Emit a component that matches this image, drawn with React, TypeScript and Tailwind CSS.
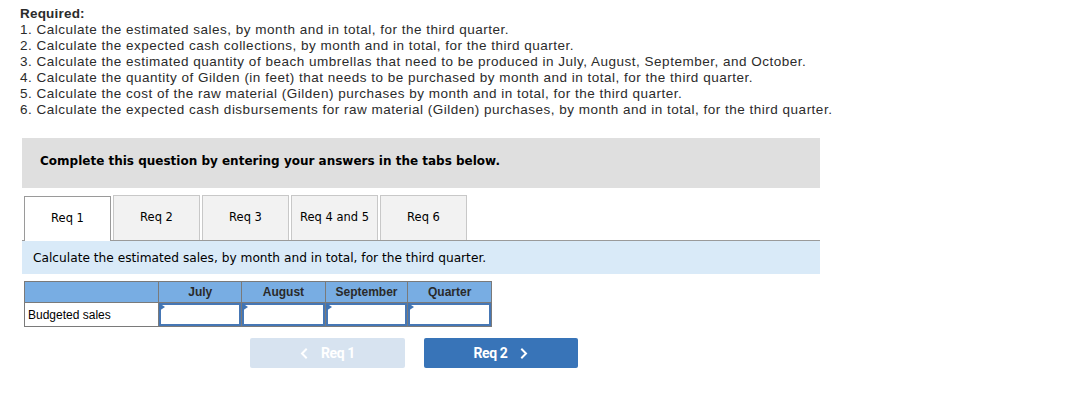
import React from "react";

const lines = [
  "1. Calculate the estimated sales, by month and in total, for the third quarter.",
  "2. Calculate the expected cash collections, by month and in total, for the third quarter.",
  "3. Calculate the estimated quantity of beach umbrellas that need to be produced in July, August, September, and October.",
  "4. Calculate the quantity of Gilden (in feet) that needs to be purchased by month and in total, for the third quarter.",
  "5. Calculate the cost of the raw material (Gilden) purchases by month and in total, for the third quarter.",
  "6. Calculate the expected cash disbursements for raw material (Gilden) purchases, by month and in total, for the third quarter.",
];

const tabs = ["Req 1", "Req 2", "Req 3", "Req 4 and 5", "Req 6"];
const cols = [
  { name: "July", w: "w-[83px]" },
  { name: "August", w: "w-[84px]" },
  { name: "September", w: "w-[83px]" },
  { name: "Quarter", w: "w-[84px]" },
];

function InputCell({ w }: { w: string }) {
  return (
    <div className={`${w} h-[23px] border-l border-[#7a7a7a] bg-white`}>
      <div className="relative h-full w-full border-2 border-[#4677b5] bg-white">
        <div className="absolute left-[-2px] top-[-2px] w-0 h-0 border-l-[6px] border-l-[#3f74b4] border-t-[4px] border-t-transparent border-b-[4px] border-b-transparent" />
      </div>
    </div>
  );
}

function Chevron({ dir }: { dir: "left" | "right" }) {
  return (
    <svg width="8" height="11" viewBox="0 0 8 11" className="inline-block">
      <path
        d={dir === "right" ? "M2 1.5 L6 5.5 L2 9.5" : "M6 1.5 L2 5.5 L6 9.5"}
        fill="none"
        stroke="white"
        strokeWidth="2"
        strokeLinecap="square"
      />
    </svg>
  );
}

export default function App() {
  return (
    <div className="bg-white w-[1091px] h-[414px] pl-[20px] pt-[6px]">
      <div className="text-[13.5px] leading-[16px] tracking-[0.5px] text-[#2b2b2b]" style={{ fontFamily: '"Liberation Sans", Arial, sans-serif' }}>
        <div className="font-bold tracking-[0.2px]">Required:</div>
        {lines.map((l) => (
          <div key={l}>{l}</div>
        ))}
      </div>

      <div
        className="ml-[2px] mt-[20px] w-[798px] h-[50px] bg-[#dfdfdf] flex items-center pl-[18px] pb-[5px] text-[12px] font-bold text-black"
        style={{ fontFamily: '"DejaVu Sans", Verdana, sans-serif' }}
      >
        Complete this question by entering your answers in the tabs below.
      </div>

      <div className="ml-[2px] mt-[7px] w-[798px]" style={{ fontFamily: '"DejaVu Sans", Verdana, sans-serif' }}>
        <div className="flex gap-[2px] pl-[2px] h-[45px] items-end">
          {tabs.map((t, i) => (
            <div
              key={t}
              className={
                i === 0
                  ? "w-[87px] h-[45px] bg-white border border-b-0 border-[#9a9a9a] flex items-center justify-center text-[11.5px] text-black relative z-10 -mb-px"
                  : "w-[87px] h-[45px] bg-[#f2f2f2] border border-b-0 border-[#c8c8c8] flex items-center justify-center text-[11.5px] text-black"
              }
            >
              {t}
            </div>
          ))}
        </div>
        <div className="h-[34px] bg-[#d9eaf8] border-t border-[#9a9a9a] flex items-center pl-[11px] pt-[2px] text-[12.2px] text-black">
          Calculate the estimated sales, by month and in total, for the third quarter.
        </div>
      </div>

      <div className="ml-[4px] mt-[7px] w-[468px] border border-[#7a7a7a]" style={{ fontFamily: '"Liberation Sans", Arial, sans-serif' }}>
        <div className="flex h-[21px] bg-[#78ade3] border-b border-[#7a7a7a]">
          <div className="w-[134px]" />
          {cols.map((c) => (
            <div key={c.name} className={`${c.w} border-l border-[#7a7a7a] flex items-center justify-center text-[12px] font-bold text-[#2a2a2a]`}>
              {c.name}
            </div>
          ))}
        </div>
        <div className="flex h-[23px]">
          <div className="w-[134px] flex items-center pl-[3px] text-[12px] text-black">Budgeted sales</div>
          {cols.map((c) => (
            <InputCell key={c.name} w={c.w} />
          ))}
        </div>
      </div>

      <div className="flex gap-[19px] ml-[230px] mt-[11px]" style={{ fontFamily: 'Roboto, "Liberation Sans", sans-serif' }}>
        <div className="w-[155px] h-[30px] bg-[#d7e3f0] rounded-[2px] flex items-center justify-center gap-[13px] text-white text-[14px] font-bold tracking-[-0.4px]">
          <Chevron dir="left" />
          <span>Req 1</span>
        </div>
        <div className="w-[154px] h-[30px] bg-[#3874b8] rounded-[2px] flex items-center justify-center gap-[13px] text-white text-[14px] font-bold tracking-[-0.4px]">
          <span>Req 2</span>
          <Chevron dir="right" />
        </div>
      </div>
    </div>
  );
}
